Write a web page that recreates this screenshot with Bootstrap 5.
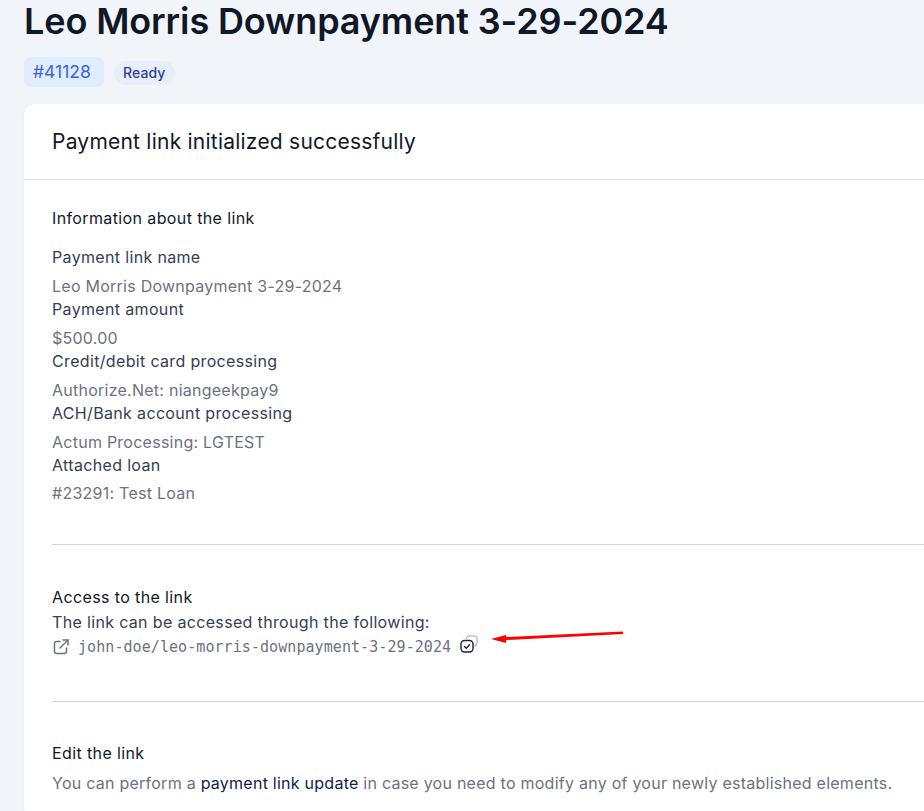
<!DOCTYPE html>
<html lang="en">
<head>
<meta charset="utf-8">
<title>Payment link</title>
<link rel="stylesheet" href="https://cdn.jsdelivr.net/npm/bootstrap@5.3.0/dist/css/bootstrap.min.css">
<style>
html,body{height:811px;overflow:hidden}
body{background:#f1f4f9;font-family:Inter,"Liberation Sans",sans-serif;color:#344054;position:relative}
.page-wrap{padding-left:24px;width:1100px}
.page-title{font-size:36px;font-weight:600;line-height:42px;color:#101828;margin:0;padding-bottom:15px;letter-spacing:-.12px}
.id-tag{font-size:17.5px;line-height:20px;padding:5px 9px;background:#e0edff;color:#3d63e0;border-radius:7px;width:80px;height:30px}
.state-pill{font-size:14px;font-weight:500;line-height:16px;padding:4px 9px;background:#e6eefa;color:#333f96;border-radius:12px;letter-spacing:.1px;height:24px;margin-left:10px;margin-top:4px}
.head-row{height:47px;gap:0}
.link-card{border:0;border-radius:12px;box-shadow:0 1px 2px rgba(16,24,40,.06);overflow:hidden}
.link-card .card-header{background:#fff;border-bottom:1px solid #e4e7ec;padding:1px 28px 0;height:76px}
.link-card .card-title{font-size:21px;font-weight:400;line-height:24px;color:#101828;margin:0;letter-spacing:.23px}
.link-card .card-body{padding:28px 28px 0;height:640px}
.sec-title{font-size:16px;font-weight:400;line-height:20px;color:#101828;margin:0;letter-spacing:.38px}
.lbl{font-size:16px;line-height:24px;color:#344054;margin:0;height:24px;letter-spacing:.34px}
.val{font-size:16px;line-height:24px;color:#6c727f;margin:0;padding-top:5px;height:28px;letter-spacing:.25px}
.val-last{padding-top:4px}
.rule{border-top:1px solid #d0d5dd;opacity:1;margin:0}
.mono{font-family:"DejaVu Sans Mono","Liberation Mono",monospace;font-size:15px;letter-spacing:.07px;color:#6c727f;line-height:20px}
.pay-link{color:#101c4e;text-decoration:none}
.muted-line{font-size:16px;line-height:24px;color:#6c727f;margin:0;letter-spacing:.25px}
.red-arrow{position:absolute;left:488px;top:626px}
.info-list{margin-top:17px;margin-bottom:39px}
.access-rule{margin-bottom:42px}
.access-note{margin-top:3px}
.link-row{margin-top:1px;height:24px}
.link-text{margin-left:8px}
.copy-ico{margin-left:8px;margin-top:-4px}
.edit-rule{margin-top:42px;margin-bottom:41px}
</style>
</head>
<body>
<div class="page-wrap">
  <h1 class="page-title">Leo Morris Downpayment 3-29-2024</h1>
  <div class="d-flex align-items-start head-row">
    <span class="id-tag">#41128</span>
    <span class="state-pill">Ready</span>
  </div>
  <div class="card link-card">
    <div class="card-header d-flex align-items-center">
      <h2 class="card-title">Payment link initialized successfully</h2>
    </div>
    <div class="card-body">
      <p class="sec-title">Information about the link</p>
      <div class="info-list">
        <p class="lbl">Payment link name</p>
        <p class="val">Leo Morris Downpayment 3-29-2024</p>
        <p class="lbl">Payment amount</p>
        <p class="val">$500.00</p>
        <p class="lbl">Credit/debit card processing</p>
        <p class="val">Authorize.Net: niangeekpay9</p>
        <p class="lbl">ACH/Bank account processing</p>
        <p class="val">Actum Processing: LGTEST</p>
        <p class="lbl">Attached loan</p>
        <p class="val val-last">#23291: Test Loan</p>
      </div>
      <hr class="rule access-rule">
      <p class="sec-title">Access to the link</p>
      <p class="lbl access-note">The link can be accessed through the following:</p>
      <div class="d-flex align-items-center link-row">
        <svg width="18" height="18" viewBox="0 0 18 18" fill="none" stroke="#6c727f" stroke-width="1.5" stroke-linecap="round" stroke-linejoin="round"><path d="M8 3.500H4.500A2 2 0 0 0 2.500 5.500v8a2 2 0 0 0 2 2h8a2 2 0 0 0 2-2V10"/><path d="M8 10 16 2"/><path d="M11 2h5v5"/></svg>
        <span class="mono link-text">john-doe/leo-morris-downpayment-3-29-2024</span>
        <svg class="copy-ico" width="20" height="20" viewBox="0 0 20 20" fill="none" stroke-linecap="round" stroke-linejoin="round"><path d="M7.500 3.500V3.500A2.500 2.500 0 0 1 10 1h5.500A2.500 2.500 0 0 1 18 3.500v5A2.500 2.500 0 0 1 15.500 11H15" stroke="#9aa0a8" stroke-width="1"/><rect x="2" y="5.500" width="12" height="11.500" rx="3.500" stroke="#1d2433" stroke-width="1.400"/><path d="m5.500 11.500 1.800 1.700 3.200-3.500" stroke="#1d2433" stroke-width="1.400"/></svg>
      </div>
      <hr class="rule edit-rule">
      <p class="sec-title">Edit the link</p>
      <p class="muted-line mt-2">You can perform a <a class="pay-link" href="#">payment link update</a> in case you need to modify any of your newly established elements.</p>
    </div>
  </div>
</div>
<svg class="red-arrow" width="140" height="18" viewBox="0 0 140 18"><path d="M135 5.500 18 11V9L3 13l15 4v-3L135 8z" fill="#f00"/></svg>
</body>
</html>
